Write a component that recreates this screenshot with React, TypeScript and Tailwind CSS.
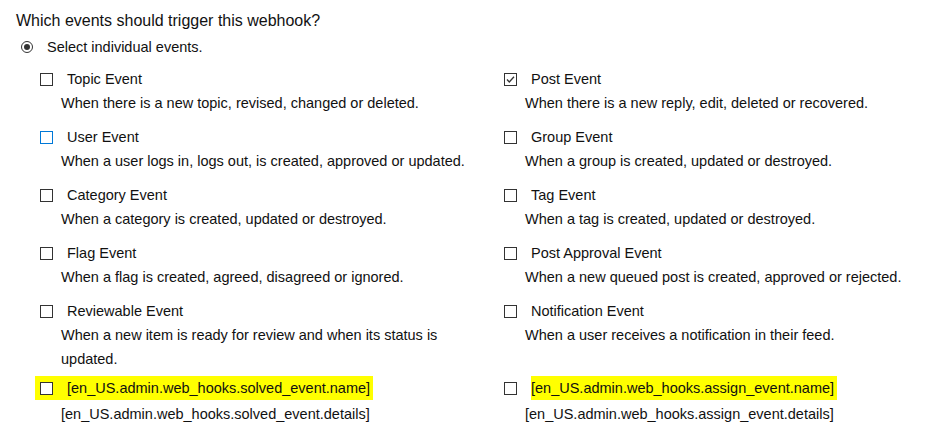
import { ReactNode } from "react";

type EventItem = {
  name: string;
  details: string;
  checked?: boolean;
  focused?: boolean;
  highlight?: "full" | "label";
};

const leftEvents: EventItem[] = [
  {
    name: "Topic Event",
    details: "When there is a new topic, revised, changed or deleted.",
  },
  {
    name: "User Event",
    details: "When a user logs in, logs out, is created, approved or updated.",
    focused: true,
  },
  {
    name: "Category Event",
    details: "When a category is created, updated or destroyed.",
  },
  {
    name: "Flag Event",
    details: "When a flag is created, agreed, disagreed or ignored.",
  },
  {
    name: "Reviewable Event",
    details:
      "When a new item is ready for review and when its status is updated.",
  },
  {
    name: "[en_US.admin.web_hooks.solved_event.name]",
    details: "[en_US.admin.web_hooks.solved_event.details]",
    highlight: "full",
  },
];

const rightEvents: EventItem[] = [
  {
    name: "Post Event",
    details: "When there is a new reply, edit, deleted or recovered.",
    checked: true,
  },
  {
    name: "Group Event",
    details: "When a group is created, updated or destroyed.",
  },
  {
    name: "Tag Event",
    details: "When a tag is created, updated or destroyed.",
  },
  {
    name: "Post Approval Event",
    details: "When a new queued post is created, approved or rejected.",
  },
  {
    name: "Notification Event",
    details: "When a user receives a notification in their feed.",
  },
  {
    name: "[en_US.admin.web_hooks.assign_event.name]",
    details: "[en_US.admin.web_hooks.assign_event.details]",
    highlight: "label",
  },
];

function Checkbox({ checked, focused }: { checked?: boolean; focused?: boolean }) {
  return (
    <span
      className={`flex h-[13px] w-[13px] shrink-0 items-center justify-center border bg-white ${
        focused ? "border-[#0078d7]" : "border-[#333]"
      }`}
    >
      {checked && (
        <svg width="11" height="11" viewBox="0 0 11 11">
          <path d="M2 5.5 L4.3 8 L9 2.8" fill="none" stroke="#333" strokeWidth="1.3" />
        </svg>
      )}
    </span>
  );
}

function EventRow({ item, last }: { item: EventItem; last?: boolean }) {
  let label: ReactNode = (
    <div className="flex h-5 items-center">
      <Checkbox checked={item.checked} focused={item.focused} />
      <span className="ml-[14px]">{item.name}</span>
    </div>
  );

  // highlighted rows (marked in the screenshot)
  if (item.highlight === "full") {
    label = (
      <div className="ml-[-5px] flex h-6 w-fit items-center bg-[#ffff00] pl-[5px] pr-[3px]">
        <Checkbox />
        <span className="ml-[14px]">{item.name}</span>
      </div>
    );
  }
  if (item.highlight === "label") {
    label = (
      <div className="flex h-6 items-center">
        <Checkbox />
        <span className="ml-[14px] flex h-6 items-center bg-[#ffff00] pr-[3px]">
          {item.name}
        </span>
      </div>
    );
  }

  return (
    <div className={last ? "mt-[-7px]" : ""}>
      {label}
      <p className="mt-[2px] w-[430px] pl-[21px] leading-6">{item.details}</p>
    </div>
  );
}

export default function App() {
  return (
    <div className="min-h-[439px] bg-white pl-4 pt-[11px] text-[14.5px] leading-5 text-[#111] [font-family:'Liberation_Sans',Arial,sans-serif]">
      <p className="text-[16px]">Which events should trigger this webhook?</p>

      <div className="mt-[6px] flex h-5 items-center pl-[5px]">
        <span className="flex h-3 w-3 items-center justify-center rounded-full border border-[#333] bg-white">
          <span className="h-[6px] w-[6px] rounded-full bg-[#333]" />
        </span>
        <span className="ml-[14px]">Select individual events.</span>
      </div>

      <div className="mt-3 ml-6 grid grid-cols-[464px_1fr] gap-y-3">
        {leftEvents.map((item, i) => (
          <>
            <EventRow key={item.name} item={item} last={i === leftEvents.length - 1} />
            <EventRow
              key={rightEvents[i].name}
              item={rightEvents[i]}
              last={i === rightEvents.length - 1}
            />
          </>
        ))}
      </div>
    </div>
  );
}
